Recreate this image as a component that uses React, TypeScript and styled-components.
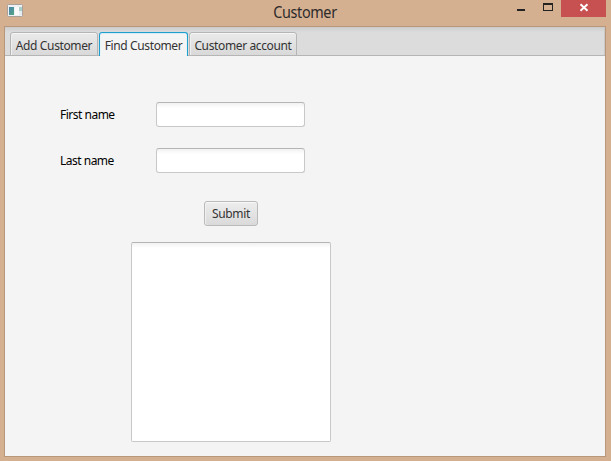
import React from 'react';
import styled, { createGlobalStyle } from 'styled-components';

const GlobalStyle = createGlobalStyle`
  * { box-sizing: border-box; }
  html, body { margin: 0; padding: 0; overflow: hidden; }
`;

const Window = styled.div`
  width: 611px;
  height: 461px;
  display: flex;
  flex-direction: column;
  padding: 0 5px 4px 4px;
  background: #d4b091;
  font-family: 'Noto Sans', sans-serif;
  font-size: 12px;
  color: #333;
`;

const TitleBar = styled.header`
  flex: 0 0 26px;
  display: grid;
  grid-template-columns: 105px 1fr 105px;
  align-items: start;
`;

const AppIcon = styled.svg`
  display: block;
  margin: 4px 0 0 3px;
`;

const Title = styled.h1`
  margin: 0;
  font-size: 16px;
  font-weight: 400;
  line-height: 24px;
  letter-spacing: -0.4px;
  text-align: center;
  transform: scaleX(0.9);
  color: #2d2a2a;
`;

const Controls = styled.div`
  display: flex;
  justify-content: flex-end;
  height: 17px;
`;

const ControlButton = styled.button<{ $close?: boolean }>`
  width: ${({ $close }) => ($close ? 45 : 27)}px;
  height: 17px;
  padding: 0;
  border: 0;
  background: ${({ $close }) => ($close ? '#c75050' : 'transparent')};

  svg { display: block; margin: 0 auto; }
`;

const Client = styled.main`
  flex: 1;
  display: flex;
  flex-direction: column;
  border: 1px solid #b8967a;
  background: #f4f4f4;
`;

const TabBar = styled.nav`
  flex: 0 0 29px;
  display: flex;
  align-items: flex-end;
  gap: 1px;
  padding-left: 5px;
  background: linear-gradient(#cbcbcb, #dcdcdc 5px);
  box-shadow: inset 0 -1px #b5b5b5, inset -1px 0 #c9c9c9;
`;

const Tab = styled.button<{ $width: number; $active?: boolean }>`
  width: ${({ $width }) => $width}px;
  height: 24px;
  padding: ${({ $active }) => ($active ? '4px 0 1px' : '4px 0 0')};
  border: 1px solid ${({ $active }) => ($active ? '#1e9fce' : '#b5b5b5')};
  border-bottom: ${({ $active }) => ($active ? '0' : '1px solid #b5b5b5')};
  border-radius: 3px 3px 0 0;
  background: ${({ $active }) => ($active ? '#f4f4f4' : 'linear-gradient(#eaeaea, #d9d9d9)')};
  box-shadow: ${({ $active }) => ($active ? 'inset 0 1px #d8eef6, inset 1px 0 #e6f3f8, inset -1px 0 #e6f3f8' : 'inset 0 1px #f5f5f5, inset 1px 0 #efefef')};
  font: inherit;
  line-height: 18px;
  letter-spacing: -0.37px;
  white-space: nowrap;
  color: #333;
`;

const Form = styled.form`
  display: flex;
  flex-direction: column;
  padding-top: 46px;
`;

const FieldRow = styled.label`
  display: grid;
  grid-template-columns: 96px 149px;
  align-items: center;
  height: 25px;
  margin: 0 0 21px 55px;
  color: #000;
`;

const FieldLabel = styled.span`
  letter-spacing: -0.5px;
`;

const Input = styled.input`
  width: 149px;
  height: 25px;
  padding: 0 7px;
  outline: none;
  border: 1px solid #c8c8c8;
  border-top-color: #b5b5b5;
  border-radius: 3px;
  background: linear-gradient(#f1f1f1, #fff 5px);
  font: inherit;
`;

const SubmitButton = styled.button`
  width: 54px;
  height: 25px;
  margin: 7px 0 16px 199px;
  padding: 0;
  border: 1px solid #bababa;
  border-radius: 3px;
  background: linear-gradient(#ededed, #dadada);
  box-shadow: inset 0 1px #f8f8f8, inset 1px 0 #efefef;
  font: inherit;
  line-height: 21px;
  letter-spacing: -0.35px;
  color: #333;
`;

const Results = styled.textarea`
  display: block;
  width: 200px;
  height: 200px;
  margin-left: 126px;
  padding: 4px 7px;
  resize: none;
  outline: none;
  border: 1px solid #c8c8c8;
  border-top-color: #b5b5b5;
  border-radius: 2px;
  background: linear-gradient(#f1f1f1, #fff 5px);
  font: inherit;
`;

export default function App() {
  return (
    <>
      <GlobalStyle />
      <Window>
        <TitleBar>
          <AppIcon width="16" height="14" viewBox="0 0 16 14">
            <defs>
              <linearGradient id="pane" x1="0" y1="0" x2="1" y2="1">
                <stop offset="0" stopColor="#4a83ad" />
                <stop offset="1" stopColor="#54a582" />
              </linearGradient>
            </defs>
            <rect x="0.5" y="0.5" width="15" height="12" rx="1" fill="#eef1f3" stroke="#a9a09a" />
            <rect x="2" y="3" width="5" height="8" fill="url(#pane)" />
            <rect x="8" y="3" width="4" height="8" fill="#fafafa" />
            <rect x="12" y="3" width="3" height="4" fill="#a9cfcb" />
            <rect x="12" y="7" width="3" height="4" fill="#e4edf3" />
          </AppIcon>
          <Title>Customer</Title>
          <Controls>
            <ControlButton aria-label="Minimize">
              <svg width="27" height="17"><rect x="10" y="9" width="8" height="2" fill="#222" /></svg>
            </ControlButton>
            <ControlButton aria-label="Maximize">
              <svg width="27" height="17"><path d="M9 3h10v8H9zM10 5v5h8V5z" fill="#222" fillRule="evenodd" /></svg>
            </ControlButton>
            <ControlButton $close aria-label="Close">
              <svg width="45" height="17"><path d="M19.5 4.2l7 6.6M26.5 4.2l-7 6.6" stroke="#fff" strokeWidth="1.9" /></svg>
            </ControlButton>
          </Controls>
        </TitleBar>
        <Client>
          <TabBar>
            <Tab $width={88}>Add Customer</Tab>
            <Tab $width={89} $active>Find Customer</Tab>
            <Tab $width={108}>Customer account</Tab>
          </TabBar>
          <Form onSubmit={(event) => event.preventDefault()}>
            <FieldRow>
              <FieldLabel>First name</FieldLabel>
              <Input />
            </FieldRow>
            <FieldRow>
              <FieldLabel>Last name</FieldLabel>
              <Input />
            </FieldRow>
            <SubmitButton>Submit</SubmitButton>
            <Results />
          </Form>
        </Client>
      </Window>
    </>
  );
}
